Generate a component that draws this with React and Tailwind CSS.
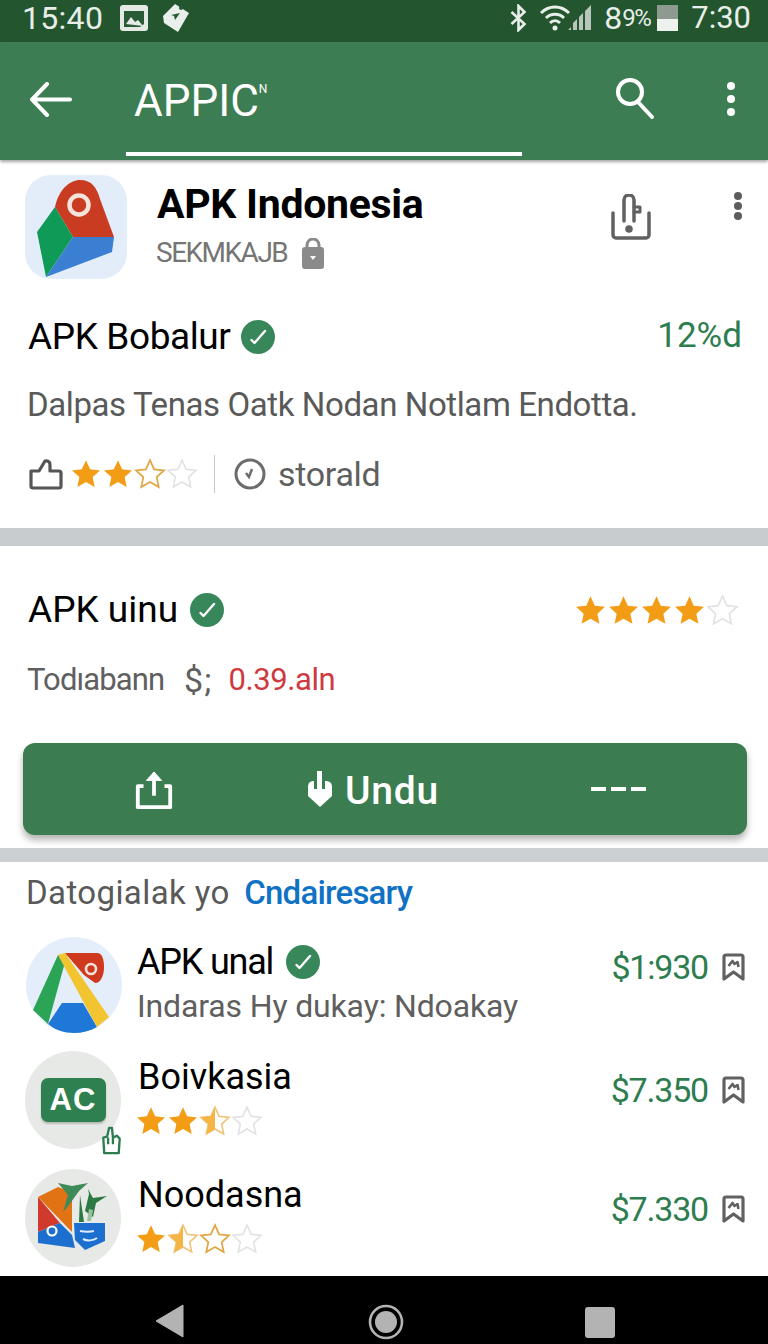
import React from 'react';

const Star = ({ type = 'full', size = 32 }) => {
  const d = 'M12 1.6l3.1 6.9 7.4.8-5.5 5 1.5 7.4L12 18l-6.5 3.7L7 14.3l-5.5-5 7.4-.8z';
  if (type === 'full') return <svg width={size} height={size} viewBox="0 0 24 24"><path d={d} fill="#f39c16" /></svg>;
  if (type === 'half') {
    return (
      <svg width={size} height={size} viewBox="0 0 24 24">
        <path d={d} fill="#fff" stroke="#eec37a" strokeWidth="1.2" />
        <path d="M12 1.6L8.9 8.5l-7.4.8 5.5 5-1.5 7.4L12 18z" fill="#f5b546" />
      </svg>
    );
  }
  if (type === 'outline') return <svg width={size} height={size} viewBox="0 0 24 24"><path d={d} fill="#fff" stroke="#e0a544" strokeWidth="1.3" /></svg>;
  return <svg width={size} height={size} viewBox="0 0 24 24"><path d={d} fill="#fff" stroke="#e2e2e2" strokeWidth="1.2" /></svg>;
};

const Stars = ({ items, size, className = '' }) => (
  <div className={`flex items-center ${className}`}>
    {items.map((t, i) => <Star key={i} type={t} size={size} />)}
  </div>
);

const Verified = ({ size = 34 }) => (
  <svg width={size} height={size} viewBox="0 0 34 34" className="shrink-0">
    <circle cx="17" cy="17" r="17" fill="#38875a" />
    <path d="M10.5 20l3 3L24 11" fill="none" stroke="#fff" strokeWidth="2.4" strokeLinecap="round" strokeLinejoin="round" />
  </svg>
);

const BookmarkIcon = () => (
  <svg width="23" height="28" viewBox="0 0 23 28" fill="none" stroke="#616161" strokeWidth="3.2" strokeLinejoin="round">
    <path d="M2 4a2 2 0 0 1 2-2h15a2 2 0 0 1 2 2v22l-9.500-7-9.500 7z" />
    <path d="M6.500 13l4-5 2 3 3-2 1 5" strokeWidth="2.600" />
  </svg>
);

const PriceRow = ({ price }) => (
  <div className="flex items-center gap-[14px]">
    <span className="text-[34px] leading-[38px] text-[#2d7d4f] tracking-[-1.2px]">{price}</span>
    <BookmarkIcon />
  </div>
);

const StatusBar = () => (
  <div className="h-[42px] bg-[#23562f] flex items-center justify-between pl-[22px] pr-[17px] pb-[6px] text-[#e8eee9] text-[32px] leading-[36px]">
    <div className="flex items-center">
      <span className="tracking-[0.3px]">15:40</span>
      <svg width="28" height="26" viewBox="0 0 28 26" className="ml-[17px]">
        <rect width="28" height="26" rx="3" fill="#e4ebe5" />
        <path d="M4 6h20v13l-4 3H4z" fill="#2a5b37" />
        <path d="M6 19l5-7 4 5 3-2 5 6z" fill="#e4ebe5" />
      </svg>
      <svg width="28" height="30" viewBox="0 0 28 30" className="ml-[14px]">
        <path d="M13 1l14 9-11 19L2 20 1 13z" fill="#e9efea" />
        <path d="M9 12l9-2-5 7-1-4z" fill="#2a5b37" />
        <circle cx="19" cy="5" r="2" fill="#2a5b37" />
      </svg>
    </div>
    <div className="flex items-center">
      <svg width="19" height="28" viewBox="0 0 18 28" fill="none" stroke="#e8eee9" strokeWidth="2.6">
        <path d="M2 8l13 12-6 6V2l6 6L2 20" />
      </svg>
      <svg width="52" height="26" viewBox="0 0 52 26" className="ml-[12px]">
        <g fill="none" stroke="#e8eee9" strokeWidth="3">
          <path d="M1 8c8-8 20-8 28 0" />
          <path d="M6 13c5-5 13-5 18 0" />
          <path d="M10 18c3-3 7-3 10 0" />
        </g>
        <circle cx="15" cy="23" r="2.5" fill="#e8eee9" />
        <path d="M28 25l3-3v3zM33 25v-7l4-4v11zM39 25V12l4-4v17zM45 25V6l6-6v25z" fill="#b9c6bb" />
      </svg>
      <span className="ml-[12px] flex items-center w-[44px]">
        8<span className="text-[24px] tracking-[-1.5px]">9%</span>
      </span>
      <div className="ml-[9px] w-[21px] h-[26px] flex flex-col">
        <div className="h-[14px] bg-[#8d9a8f]" />
        <div className="h-[12px] bg-[#eef2ee]" />
      </div>
      <span className="ml-[13px] text-[31px]">7:30</span>
    </div>
  </div>
);

const AppBar = () => (
  <div className="h-[118px] bg-[#3d7d53] shadow-[0_2px_3px_rgba(0,0,0,0.35)] relative z-10 flex items-start">
    <svg width="42" height="35" viewBox="0 0 42 35" className="ml-[30px] mt-[40px]" fill="none" stroke="#fff" strokeWidth="4" strokeLinecap="round">
      <path d="M40 17.500H4M17 2L2 17.500 17 33" />
    </svg>
    <div className="absolute left-[126px] bottom-[4px] w-[396px] h-[4px] bg-white" />
    <div className="ml-[62px] mt-[35px] text-white text-[44px] leading-[48px] flex items-start">
      <span>APPIC</span>
      <span className="text-[12px] leading-none mt-[6px]">N</span>
    </div>
    <div className="ml-auto mr-[33px] mt-[36px] flex items-start gap-[73px]">
      <svg width="38" height="41" viewBox="0 0 38 41" fill="none" stroke="#fff" strokeWidth="4" strokeLinecap="round">
        <circle cx="14" cy="14" r="12" />
        <path d="M22 24l14 15" />
      </svg>
      <div className="flex flex-col gap-[5px] pt-[4px]">
        <div className="w-[8px] h-[8px] rounded-full bg-white" />
        <div className="w-[8px] h-[8px] rounded-full bg-white" />
        <div className="w-[8px] h-[8px] rounded-full bg-white" />
      </div>
    </div>
  </div>
);

const MainIcon = () => (
  <div className="w-[102px] h-[104px] rounded-[26px] bg-[#e3edf9] shrink-0">
    <svg width="102" height="104" viewBox="0 0 102 104">
      <path d="M30 32C34 14 45 5 55 5c12 0 17 8 20 19l14 38H48z" fill="#c93c22" />
      <path d="M30 32L12 57l9 45 27-40z" fill="#0f9a57" />
      <path d="M48 62h41l-2 15-66 25z" fill="#3a7fd2" />
      <circle cx="54" cy="30" r="9.500" fill="none" stroke="#f5e3dc" strokeWidth="4.500" />
    </svg>
  </div>
);

const HeaderCard = () => (
  <section className="h-[368px] bg-white pl-[25px] pr-[26px] pt-[15px]">
    <div className="flex items-start">
      <MainIcon />
      <div className="ml-[30px] pt-[5px] flex-1">
        <div className="text-[41px] leading-[48px] font-bold text-black tracking-[-0.3px]">APK Indonesia</div>
        <div className="flex items-center mt-[7px] -ml-px">
          <span className="text-[28px] leading-[36px] text-[#757575] tracking-[-1.5px]">SEKMKAJB</span>
          <svg width="22" height="31" viewBox="0 0 22 31" className="ml-[15px]">
            <path d="M5 10V7a6 6 0 0 1 12 0v3" fill="none" stroke="#8a8a8a" strokeWidth="3" />
            <rect y="9" width="22" height="22" rx="3" fill="#8a8a8a" />
            <path d="M8 18h6l-3 4z" fill="#fff" />
          </svg>
        </div>
      </div>
      <svg width="42" height="46" viewBox="0 0 42 46" className="mt-[19px] mr-[82px]" fill="none" stroke="#616161" strokeWidth="3.500" strokeLinecap="round" strokeLinejoin="round">
        <path d="M3 19v22a3 3 0 0 0 3 3h30a3 3 0 0 0 3-3V19" />
        <path d="M14 27V6a5 5 0 0 1 10 0v21" />
        <path d="M24 13h6v5h-6" strokeWidth="3" />
        <circle cx="19" cy="35" r="2" fill="#616161" />
      </svg>
      <div className="flex flex-col gap-[2px] mt-[17px]">
        <div className="w-[8px] h-[8px] rounded-full bg-[#5d5d5d]" />
        <div className="w-[8px] h-[8px] rounded-full bg-[#5d5d5d]" />
        <div className="w-[8px] h-[8px] rounded-full bg-[#5d5d5d]" />
      </div>
    </div>
    <div className="flex items-center justify-between mt-[36px] pl-[3px]">
      <div className="flex items-center gap-[11px]">
        <span className="text-[37px] leading-[44px] text-black tracking-[-0.4px]">APK Bobalur</span>
        <Verified />
      </div>
      <span className="text-[35px] leading-[44px] text-[#2d7d4f] -mt-[2px]">12%d</span>
    </div>
    <p className="mt-[24px] pl-[2px] text-[33px] leading-[44px] text-[#595959] tracking-[-0.4px]">Dalpas Tenas Oatk Nodan Notlam Endotta.</p>
    <div className="flex items-center mt-[25px] pl-[4px]">
      <svg width="34" height="32" viewBox="0 0 34 32" fill="none" stroke="#555" strokeWidth="3.200" strokeLinejoin="round">
        <path d="M2 13h8l6-10c4-1 5 2 5 4v6h9a2 2 0 0 1 2 2v13a2 2 0 0 1-2 2H4a2 2 0 0 1-2-2z" />
      </svg>
      <Stars items={['full', 'full', 'outline', 'empty']} size={32} className="ml-[7px]" />
      <div className="w-px h-[38px] bg-[#c8c8c8] ml-[16px]" />
      <svg width="32" height="32" viewBox="0 0 32 32" fill="none" stroke="#6b6b6b" strokeWidth="3" className="ml-[19px]">
        <circle cx="16" cy="16" r="14" />
        <path d="M12 15l3 4 3-8" strokeWidth="2.400" />
      </svg>
      <span className="ml-[12px] text-[34px] leading-[44px] text-[#5f5f5f] tracking-[-0.3px]">storald</span>
    </div>
  </section>
);

const ActionCard = () => (
  <section className="h-[302px] bg-white pl-[23px] pr-[21px] pt-[41px]">
    <div className="flex items-center justify-between pl-[5px] pr-[8px]">
      <div className="flex items-center gap-[12px]">
        <span className="text-[37px] leading-[46px] text-black">APK uinu</span>
        <Verified />
      </div>
      <Stars items={['full', 'full', 'full', 'full', 'empty']} size={33} />
    </div>
    <div className="flex items-center mt-[25px] pl-[4px]">
      <span className="text-[31px] leading-[44px] text-[#5f5f5f] tracking-[-0.9px]">Todıabann</span>
      <span className="ml-[20px] text-[34px] leading-[44px] text-[#5f5f5f] tracking-[1px]">$;</span>
      <span className="ml-[16px] text-[31px] leading-[44px] text-[#cf3a3f] tracking-[-0.4px]">0.39.aln</span>
    </div>
    <div className="mt-[41px] h-[92px] rounded-[12px] bg-[#3b7d51] shadow-[0_5px_7px_rgba(0,0,0,0.3)] flex items-center text-white">
      <svg width="40" height="40" viewBox="0 0 40 42" fill="none" stroke="#fff" strokeWidth="4" strokeLinejoin="round" className="ml-[111px] mt-[2px]">
        <path d="M9 17H3v22h34V17h-6" />
        <path d="M20 27V5" />
        <path d="M12 11l8-9 8 9z" fill="#fff" strokeWidth="1" />
      </svg>
      <svg width="26" height="36" viewBox="0 0 26 36" className="ml-[133px]">
        <path d="M10 0h5v18h3v-8c5 0 7 2 7 6v9l-12 11L1 25v-9c0-4 2-6 6-6v8h3z" fill="#fff" />
      </svg>
      <span className="ml-[12px] mt-[3px] text-[39px] leading-[44px] font-medium tracking-[0.8px]">Undu</span>
      <span className="ml-[152px] flex gap-[5px]">
        <span className="w-[15px] h-[4px] bg-white" />
        <span className="w-[15px] h-[4px] bg-white" />
        <span className="w-[15px] h-[4px] bg-white" />
      </span>
    </div>
  </section>
);

const MapsIcon = () => (
  <svg width="96" height="98" viewBox="0 0 96 98">
    <circle cx="48" cy="49" r="48" fill="#e4eefa" />
    <path d="M22 88l14-21h21l14 24c-7 4-15 6-23 6-10 0-19-3-26-9z" fill="#1f78d8" />
    <path d="M32 19h9L22 88 7 74z" fill="#2ba456" />
    <path d="M39 17h32c5 0 7 6 7 14s-3 16-9 16l-11-8z" fill="#cf3a1f" />
    <path d="M32 19l7-2 44 64-12 10z" fill="#f2c430" />
    <circle cx="65" cy="33" r="5" fill="none" stroke="#f6e3db" strokeWidth="2.600" />
  </svg>
);

const AcIcon = () => (
  <div className="relative w-[96px] h-[98px] rounded-full bg-[#e7e9e7] flex items-center justify-center shrink-0 -ml-px">
    <div className="w-[65px] h-[44px] rounded-[7px] bg-[#2f8050] flex items-center justify-center text-white text-[31px] font-bold tracking-[1px] shadow-[0_2px_2px_rgba(0,0,0,0.2)]" style={{ fontFamily: '"Liberation Sans", sans-serif' }}>AC</div>
    <svg width="20" height="29" viewBox="0 0 20 30" className="absolute left-[76px] top-[75px]" fill="#fff" stroke="#2b7d50" strokeWidth="2.400" strokeLinejoin="round">
      <path d="M8 2h3l1 10 4-2 3 3-1 15H3L2 12l4-1z" />
      <path d="M7 12v7M12 12v7" />
    </svg>
  </div>
);

const TropicalIcon = () => (
  <div className="w-[96px] h-[98px] rounded-full bg-[#e7e9e7] shrink-0 -ml-px">
    <svg width="96" height="98" viewBox="0 0 96 98">
      <path d="M13 28l20-10 14 5v40z" fill="#e27314" />
      <path d="M13 28l22 26-22 9z" fill="#cf3a2c" />
      <path d="M13 63l22-9 12 12 3 13-37-5z" fill="#1c6ecf" />
      <path d="M49 54h31v18l-20 9-10-10z" fill="#1c6ecf" />
      <circle cx="27" cy="62" r="4.500" fill="none" stroke="#fff" strokeWidth="2.200" />
      <path d="M55 62c5 1 10 1 14 0M58 70c4 2 10 2 14-1" fill="none" stroke="#dcebfb" strokeWidth="2" />
      <path d="M33 14l14 3 16-3-9 8-10 14-6 7 5-17z" fill="#3e8a58" />
      <path d="M54 53l1-27 4 27zM60 42l4-17-1-5 5 9 14-2-11 7-3 14z" fill="#2c7a43" />
      <path d="M62 52l2-12 4 1-2 11z" fill="#9cc29d" />
    </svg>
  </div>
);

const ListRow = ({ icon, name, nameClass = '', sub, verified, stars, price, priceClass = '', className = '' }) => (
  <div className={`flex ${className}`}>
    <div className="shrink-0 w-[96px]">{icon}</div>
    <div className="flex-1 ml-[16px] pt-[3px]">
      <div className="flex items-center gap-[13px]">
        <span className={`text-[36px] leading-[46px] text-black ${nameClass}`}>{name}</span>
        {verified && <Verified size={34} />}
      </div>
      {sub && <div className="text-[32px] leading-[44px] text-[#5f5f5f] -mt-[1px] -ml-[1px] tracking-[-0.15px]">{sub}</div>}
      {stars && <Stars items={stars} size={32} className="mt-[5px] -ml-[3px]" />}
    </div>
    <div className={priceClass}>
      <PriceRow price={price} />
    </div>
  </div>
);

const RelatedList = () => (
  <section className="h-[414px] bg-white pl-[26px] pr-[23px] overflow-hidden">
    <div className="pt-[12px] text-[33px] leading-[38px] text-[#595959] tracking-[0.4px]">
      Datogialak yo <span className="ml-[6px] font-medium text-[#0f72c4] tracking-[-0.8px]">Cndairesary</span>
    </div>
    <ListRow className="mt-[24px]" icon={<MapsIcon />} name="APK unal" nameClass="-ml-[1px] tracking-[-1.2px]" verified sub="Indaras Hy dukay: Ndoakay" price="$1:930" priceClass="pt-[12px]" />
    <ListRow className="mt-[17px]" icon={<AcIcon />} name="Boivkasia" stars={['full', 'full', 'half', 'empty']} price="$7.350" priceClass="pt-[20px]" />
    <ListRow className="mt-[20px]" icon={<TropicalIcon />} name="Noodasna" stars={['full', 'half', 'outline', 'empty']} price="$7.330" priceClass="pt-[21px]" />
  </section>
);

const NavBar = () => (
  <div className="h-[68px] bg-black flex items-start pt-[28px] pl-[155px]">
    <svg width="30" height="34" viewBox="0 0 30 34"><path d="M28 1v32L1 17z" fill="#b3b3b3" stroke="#b3b3b3" strokeLinejoin="round" /></svg>
    <svg width="36" height="36" viewBox="0 0 36 36" className="ml-[183px]">
      <circle cx="18" cy="18" r="16" fill="none" stroke="#b3b3b3" strokeWidth="2.600" />
      <circle cx="18" cy="18" r="11" fill="#b3b3b3" />
    </svg>
    <div className="ml-[181px] mt-[3px] w-[30px] h-[31px] rounded-[3px] bg-[#b3b3b3]" />
  </div>
);

export default function App() {
  return (
    <div className="w-[768px] h-[1344px] bg-white overflow-hidden flex flex-col" style={{ fontFamily: 'Roboto, "Liberation Sans", sans-serif' }}>
      <StatusBar />
      <AppBar />
      <HeaderCard />
      <div className="h-[18px] bg-[#c9ccce]" />
      <ActionCard />
      <div className="h-[14px] bg-[#cdd0d2]" />
      <RelatedList />
      <NavBar />
    </div>
  );
}
